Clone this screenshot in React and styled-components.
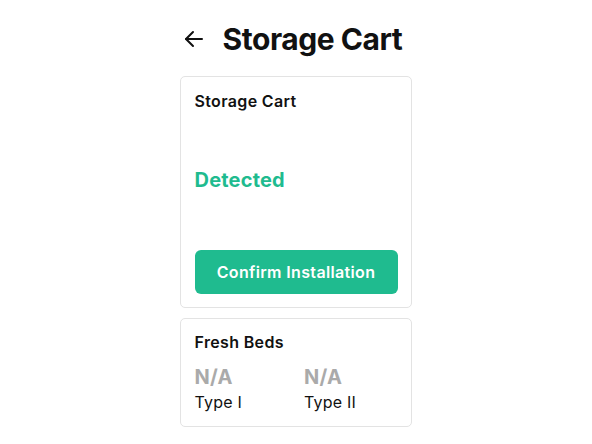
import styled, { createGlobalStyle } from "styled-components";

const GlobalStyle = createGlobalStyle`
  body {
    margin: 0;
    background: #ffffff;
    font-family: Inter, "Noto Sans", sans-serif;
    color: #111111;
  }
`;

const Page = styled.div`
  display: flex;
  justify-content: center;
  padding-top: 20px;
  padding-right: 1px;
`;

const Column = styled.div`
  width: 232px;
  display: flex;
  flex-direction: column;
`;

const Header = styled.header`
  display: flex;
  align-items: center;
  gap: 17px;
  height: 38px;
  margin-left: 2px;
  margin-bottom: 18px;
`;

const BackButton = styled.button`
  display: flex;
  align-items: center;
  padding: 0;
  border: none;
  background: none;
  cursor: pointer;
  color: #111111;
`;

const Title = styled.h1`
  margin: 0;
  font-size: 30px;
  font-weight: 700;
  letter-spacing: -0.45px;
`;

const Card = styled.section`
  display: flex;
  flex-direction: column;
  box-sizing: border-box;
  height: ${(p) => p.$height}px;
  padding: ${(p) => p.$padTop}px 13px 13px 14px;
  margin-bottom: 10px;
  border: 1px solid #e3e3e3;
  border-radius: 5px;
`;

const CardTitle = styled.h2`
  margin: 0;
  font-size: 16px;
  font-weight: 600;
  line-height: 20px;
  letter-spacing: 0.35px;
`;

const Status = styled.div`
  flex: 1;
  display: flex;
  align-items: center;
  padding-bottom: 2px;
  font-size: 20px;
  font-weight: 700;
  letter-spacing: 0.2px;
  color: #1fbb8f;
`;

const ConfirmButton = styled.button`
  height: 44px;
  border: none;
  border-radius: 6px;
  background: #1fbb8f;
  color: #ffffff;
  font-family: inherit;
  font-size: 16px;
  font-weight: 600;
  letter-spacing: 0.35px;
  cursor: pointer;
`;

const Stats = styled.div`
  display: grid;
  grid-template-columns: 1fr 1fr;
  gap: 16px;
  margin-top: 13px;
`;

const Stat = styled.div`
  display: flex;
  flex-direction: column;
  gap: 2px;
`;

const StatValue = styled.span`
  font-size: 20px;
  font-weight: 700;
  line-height: 24px;
  letter-spacing: 0.2px;
  color: #aaaaaa;
`;

const StatLabel = styled.span`
  font-size: 16px;
  line-height: 22px;
  letter-spacing: 0.2px;
  color: #111111;
`;

function ArrowLeft() {
  return (
    <svg width="24" height="24" viewBox="0 0 24 24" fill="none" stroke="currentColor" strokeWidth="2" strokeLinecap="round" strokeLinejoin="round">
      <path d="M20 12H4" />
      <path d="M11 5l-7 7 7 7" />
    </svg>
  );
}

const beds = [
  { label: "Type I", value: "N/A" },
  { label: "Type II", value: "N/A" },
];

export default function App() {
  return (
    <>
      <GlobalStyle />
      <Page>
        <Column>
          <Header>
            <BackButton aria-label="Back">
              <ArrowLeft />
            </BackButton>
            <Title>Storage Cart</Title>
          </Header>
          <Card $height={232} $padTop={14}>
            <CardTitle>Storage Cart</CardTitle>
            <Status>Detected</Status>
            <ConfirmButton>Confirm Installation</ConfirmButton>
          </Card>
          <Card $height={109} $padTop={13}>
            <CardTitle>Fresh Beds</CardTitle>
            <Stats>
              {beds.map((b) => (
                <Stat key={b.label}>
                  <StatValue>{b.value}</StatValue>
                  <StatLabel>{b.label}</StatLabel>
                </Stat>
              ))}
            </Stats>
          </Card>
        </Column>
      </Page>
    </>
  );
}
